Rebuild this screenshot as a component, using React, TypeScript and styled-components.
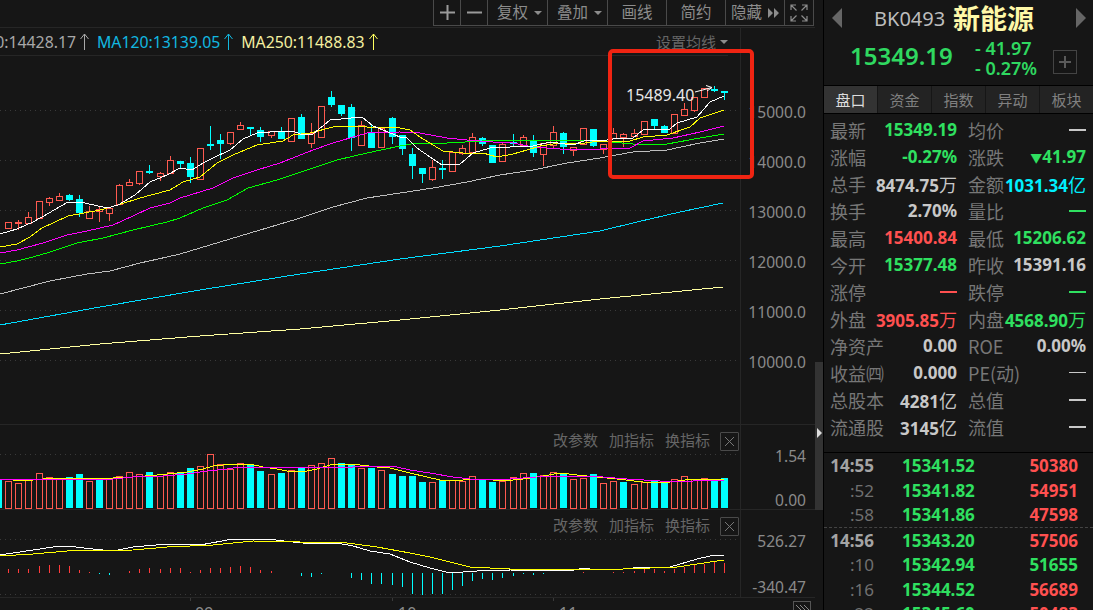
import styled, { createGlobalStyle } from "styled-components";

const FONT = `"Noto Sans", "Noto Sans CJK SC", sans-serif`;
const CJK = `"Noto Sans CJK SC", sans-serif`;
const UP = "#ff5a50";
const CYAN = "#00ffff";

const GlobalStyle = createGlobalStyle`
  html, body {
    margin: 0;
    height: 610px;
    overflow: hidden;
    background: #161616;
    font-family: ${FONT};
  }
`;

const Page = styled.div`
  display: flex;
  width: 1093px;
  height: 610px;
  overflow: hidden;
  background: #161616;
`;
const ChartColumn = styled.div`
  width: 815px;
  display: flex;
  flex-direction: column;
`;
const Toolbar = styled.div`
  height: 28px;
  box-sizing: border-box;
  padding-right: 1px;
  display: flex;
  justify-content: flex-end;
  align-items: flex-start;
  border-bottom: 1px solid #262626;
`;
const ToolGroup = styled.div`
  display: flex;
  height: 25px;
  border: 1px solid #4a4a4a;
  border-top: 0;
`;
const ToolButton = styled.div<{ $w: number; $inset?: number }>`
  width: ${(p) => p.$w}px;
  box-sizing: border-box;
  padding-left: ${(p) => p.$inset ?? 0}px;
  display: flex;
  align-items: center;
  justify-content: center;
  gap: 6px;
  color: #8c8c8c;
  font-size: 15.5px;
  line-height: 1;
  border-right: 1px solid #4a4a4a;
  &:last-child {
    border-right: 0;
  }
`;
const Caret = styled.i`
  width: 0;
  height: 0;
  border-left: 4px solid transparent;
  border-right: 4px solid transparent;
  border-top: 4px solid #8c8c8c;
`;
const Pane = styled.div<{ $h: number }>`
  height: ${(p) => p.$h}px;
  flex: none;
  box-sizing: border-box;
  display: flex;
  position: relative;
  border-bottom: 1px solid #262626;
`;
const ChartArea = styled.div`
  width: 741px;
  box-sizing: border-box;
  border-right: 1px solid #262626;
  display: flex;
  flex-direction: column;
  position: relative;
`;
const MaBar = styled.div`
  height: 28px;
  width: 728px;
  box-sizing: border-box;
  flex: none;
  display: flex;
  align-items: center;
  border-bottom: 1px solid #262626;
  font-size: 15.8px;
  white-space: nowrap;
`;
const ClippedMa = styled.div`
  width: 97px;
  display: flex;
  justify-content: flex-end;
  overflow: hidden;
`;
const MaItem = styled.span<{ $c: string }>`
  color: ${(p) => p.$c};
  display: inline-flex;
  align-items: center;
  gap: 4px;
  margin-right: 8px;
`;
const MaSetting = styled.span`
  margin-left: auto;
  color: #666;
  font-size: 15px;
  display: inline-flex;
  align-items: center;
  gap: 4px;
`;
const Svg = styled.svg`
  display: block;
  flex: none;
`;
const Axis = styled.div<{ $top: number }>`
  flex: 1;
  padding-top: ${(p) => p.$top}px;
  padding-right: 9px;
  color: #8a8a8a;
  font-size: 15.6px;
  text-align: right;
`;
const AxisLabel = styled.div<{ $h: number; $gap?: number }>`
  height: ${(p) => p.$h}px;
  line-height: ${(p) => p.$h}px;
  margin-top: ${(p) => p.$gap ?? 0}px;
`;
const HighlightBox = styled.div`
  position: absolute;
  left: 608px;
  top: 21px;
  width: 146px;
  height: 130px;
  box-sizing: border-box;
  border: 4px solid #f02412;
  border-radius: 5px;
`;
const HighLabel = styled.span`
  position: absolute;
  left: 626px;
  top: 57px;
  color: #e8e8e8;
  font-size: 16px;
  line-height: 20px;
`;
const PaneTools = styled.div`
  position: absolute;
  top: 5px;
  right: 1px;
  display: flex;
  align-items: center;
  gap: 11px;
  color: #666;
  font-size: 15px;
  line-height: 20px;
`;
const PaneToolLabel = styled.span`
  padding-bottom: 2px;
`;
const CloseBox = styled.span`
  width: 17px;
  height: 17px;
  margin-left: -1px;
  border: 1px solid #4a4a4a;
  border-radius: 1px;
  display: flex;
  align-items: center;
  justify-content: center;
`;
const TimeAxis = styled.div`
  flex: 1;
  position: relative;
  overflow: hidden;
  color: #8a8a8a;
  font-size: 16px;
`;
const TimeLabel = styled.span<{ $x: number }>`
  position: absolute;
  left: ${(p) => p.$x}px;
  top: 5px;
  line-height: 20px;
`;
const Tick = styled.i<{ $x: number }>`
  position: absolute;
  left: ${(p) => p.$x}px;
  top: 0;
  height: 3px;
  border-left: 1px solid #3a3a3a;
`;
const CornerBox = styled.span`
  position: absolute;
  right: 4px;
  top: 3px;
  width: 16px;
  height: 16px;
  border: 1px solid #555;
`;
const ScrollTrack = styled.div`
  width: 8px;
  flex: none;
  padding-top: 362px;
`;
const ScrollThumb = styled.div`
  height: 148px;
  background: #333;
  display: flex;
  justify-content: center;
  padding-top: 66px;
  box-sizing: border-box;
`;
const SidePanel = styled.div`
  flex: 1;
  border-left: 1px solid #000;
  display: flex;
  flex-direction: column;
  min-width: 0;
`;
const TitleRow = styled.div`
  height: 36px;
  flex: none;
  display: flex;
  align-items: center;
  padding: 0 7px 0 8px;
`;
const Triangle = styled.i<{ $dir: "l" | "r" }>`
  width: 0;
  height: 0;
  border-top: 10px solid transparent;
  border-bottom: 10px solid transparent;
  ${(p) => (p.$dir === "l" ? "border-right: 10px solid #666;" : "border-left: 10px solid #666;")}
`;
const Code = styled.span`
  margin-left: 32px;
  color: #bdbdbd;
  font-size: 20px;
  width: 79px;
`;
const Name = styled.span`
  flex: 1;
  color: #fff8a8;
  font-family: ${CJK};
  font-size: 27px;
  font-weight: 700;
  line-height: 36px;
`;
const PriceRow = styled.div`
  height: 49px;
  flex: none;
  box-sizing: border-box;
  display: flex;
  align-items: center;
  padding: 0 0 11px 26px;
`;
const BigPrice = styled.span`
  width: 125px;
  color: #2fd860;
  font-size: 24px;
  font-weight: 600;
`;
const ChangeStack = styled.div`
  width: 78px;
  margin-top: 6px;
  color: #2fd860;
  font-size: 18px;
  font-weight: 600;
  line-height: 20px;
`;
const AddBox = styled.span`
  width: 22px;
  height: 22px;
  margin-top: 13px;
  border: 1px solid #444;
  display: flex;
  align-items: center;
  justify-content: center;
`;
const Tabs = styled.div`
  height: 29px;
  box-sizing: border-box;
  flex: none;
  display: flex;
  gap: 1px;
  border-top: 1px solid #000;
  border-bottom: 1px solid #000;
`;
const Tab = styled.div<{ $active?: boolean }>`
  flex: 1;
  display: flex;
  align-items: center;
  justify-content: center;
  background: ${(p) => (p.$active ? "#333" : "#232323")};
  color: ${(p) => (p.$active ? "#dcdcdc" : "#808080")};
  font-size: 15px;
`;
const QuoteGrid = styled.div`
  padding: 2px 0 0 6px;
  display: grid;
  grid-template-columns: 127px 118px;
  column-gap: 11px;
  flex: none;
`;
const QuoteCell = styled.div`
  height: 27px;
  display: flex;
  align-items: center;
  justify-content: space-between;
  white-space: nowrap;
`;
const QuoteLabel = styled.span`
  color: #777;
  font-family: ${CJK};
  font-size: 18px;
`;
const toneColor: Record<string, string> = {
  green: "#2fe060",
  red: "#ff5050",
  cyan: "#00f0ff",
  white: "#c8c8c8",
};
const QuoteValue = styled.span<{ $tone: string }>`
  color: ${(p) => toneColor[p.$tone]};
  margin-left: -2px;
  font-size: 17px;
  font-weight: 700;
  small {
    font-family: ${CJK};
    font-size: 18px;
    font-weight: 400;
  }
  i {
    font-style: normal;
    font-size: 12px;
  }
`;
const Dash = styled.i<{ $tone: string; $thin?: boolean }>`
  width: 17px;
  height: ${(p) => (p.$thin ? 1 : 2)}px;
  background: ${(p) => toneColor[p.$tone]};
`;
const TradeList = styled.div`
  margin-top: 12px;
  border-top: 1px solid #000;
  flex: 1;
  overflow: hidden;
`;
const TradeRow = styled.div<{ $split?: boolean }>`
  height: 24.75px;
  box-sizing: border-box;
  display: grid;
  grid-template-columns: 50px 103px 101px;
  align-items: center;
  font-size: 17px;
  font-weight: 700;
  ${(p) => (p.$split ? "border-top: 1px dashed #444;" : "")}
`;
const TradeTime = styled.span<{ $major?: boolean }>`
  text-align: right;
  color: ${(p) => (p.$major ? "#a4a4a4" : "#707070")};
  font-weight: ${(p) => (p.$major ? 700 : 400)};
`;
const TradePrice = styled.span`
  color: #2fe060;
  padding-left: 28px;
`;
const TradeVolume = styled.span<{ $tone: string }>`
  text-align: right;
  color: ${(p) => toneColor[p.$tone]};
`;

const barX = (i: number) => Math.round(8.3 + 10.085 * i);

// wick top, body top, body bottom, wick bottom, 1 = up
type Candle = [number, number, number, number, number];
const candles: Candle[] = [
  [222, 222, 228, 229, 1], [220, 222, 223, 230, 1], [212, 217, 223, 223, 1], [201, 201, 218, 218, 1],
  [197, 198, 202, 206, 1], [193, 196, 200, 200, 1], [194, 195, 200, 201, 0], [195, 199, 213, 217, 0],
  [206, 211, 218, 218, 1], [207, 209, 211, 222, 1], [207, 208, 213, 221, 1], [184, 185, 204, 204, 1],
  [179, 182, 185, 185, 1], [171, 171, 183, 185, 1], [165, 171, 173, 174, 0], [172, 173, 176, 181, 1],
  [156, 160, 173, 173, 1], [161, 161, 164, 168, 0], [157, 163, 177, 183, 0], [148, 148, 179, 179, 1],
  [126, 144, 145, 150, 0], [134, 140, 144, 159, 0], [132, 132, 143, 145, 1], [122, 125, 129, 129, 1],
  [127, 127, 129, 135, 0], [127, 130, 137, 142, 0], [131, 131, 135, 138, 1], [127, 131, 139, 139, 0],
  [118, 118, 141, 141, 1], [114, 117, 139, 139, 0], [123, 133, 143, 148, 1], [106, 106, 137, 137, 1],
  [91, 97, 105, 107, 0], [105, 105, 114, 116, 0], [104, 107, 138, 151, 0], [121, 125, 145, 145, 1],
  [125, 133, 148, 148, 0], [128, 128, 147, 147, 1], [117, 118, 137, 144, 0], [135, 135, 149, 155, 0],
  [148, 154, 166, 179, 0], [168, 168, 174, 183, 0], [160, 167, 179, 181, 1], [160, 168, 170, 179, 0],
  [152, 152, 171, 171, 1], [145, 148, 153, 155, 1], [133, 137, 152, 153, 1], [137, 138, 144, 146, 0],
  [145, 145, 163, 163, 0], [143, 144, 161, 161, 1], [134, 142, 143, 147, 0], [135, 137, 145, 145, 1],
  [135, 141, 153, 157, 0], [143, 143, 154, 166, 1], [126, 132, 145, 149, 1], [132, 133, 147, 154, 0],
  [147, 147, 150, 156, 1], [128, 128, 144, 144, 1], [129, 129, 146, 147, 0], [144, 144, 149, 154, 1],
  [128, 133, 138, 139, 1], [133, 134, 137, 147, 1], [129, 133, 136, 136, 1], [121, 121, 134, 134, 1],
  [119, 119, 126, 129, 0], [125, 126, 133, 133, 0], [114, 114, 133, 133, 1], [103, 109, 115, 115, 1],
  [97, 97, 110, 112, 1], [88, 88, 97, 97, 1], [86, 89, 90, 92, 0], [91, 91, 92, 100, 0],
];

const pts = (a: number[][]) => a.map((p) => p.join(",")).join(" ");

const maLines: { color: string; points: number[][] }[] = [
  { color: "#ffffa0", points: [[0, 354], [100, 344], [200, 336], [300, 329], [400, 320], [500, 310], [600, 299], [723, 287]] },
  { color: "#00dcff", points: [[0, 325], [100, 307], [200, 290], [300, 274], [400, 259], [500, 246], [600, 231], [637, 222], [680, 212], [723, 203]] },
  { color: "#bdbdbd", points: [[0, 294], [50, 281], [87, 274], [110, 271], [140, 263], [167, 257], [180, 254], [240, 236], [297, 219], [333, 207], [367, 198], [400, 193], [433, 188], [467, 182], [500, 175], [533, 170], [567, 163], [600, 158], [633, 152], [667, 150], [700, 143], [724, 139]] },
  { color: "#00ff00", points: [[0, 264], [17, 261], [33, 257], [50, 252], [77, 243], [103, 238], [133, 230], [167, 222], [180, 218], [203, 208], [227, 200], [248, 188], [277, 180], [310, 169], [337, 160], [367, 153], [400, 146], [417, 143], [447, 143], [500, 140], [533, 140], [600, 141], [633, 144], [667, 144], [700, 138], [724, 134]] },
  { color: "#ff00ff", points: [[0, 253], [17, 250], [43, 243], [67, 235], [87, 231], [113, 225], [133, 216], [150, 208], [170, 203], [180, 198], [213, 188], [233, 178], [257, 170], [280, 163], [313, 150], [333, 143], [367, 133], [400, 132], [420, 133], [447, 138], [467, 140], [493, 142], [513, 143], [533, 147], [560, 149], [600, 149], [630, 148], [643, 141], [673, 138], [700, 132], [724, 126]] },
  { color: "#ffff00", points: [[0, 247], [17, 244], [30, 237], [42, 228], [68, 216], [100, 210], [118, 205], [140, 198], [170, 190], [183, 182], [200, 177], [217, 163], [233, 155], [257, 145], [283, 141], [293, 135], [310, 133], [333, 127], [347, 126], [367, 127], [400, 128], [410, 130], [420, 137], [433, 145], [443, 151], [463, 153], [483, 153], [497, 157], [513, 154], [527, 150], [540, 146], [560, 143], [577, 144], [600, 141], [630, 141], [643, 137], [667, 135], [690, 127], [700, 118], [724, 110]] },
  { color: "#ffffff", points: [[0, 234], [17, 229], [33, 222], [42, 217], [68, 202], [85, 203], [107, 208], [118, 205], [135, 195], [150, 182], [167, 175], [180, 168], [192, 170], [203, 163], [213, 158], [230, 150], [243, 139], [257, 133], [270, 132], [293, 131], [300, 134], [313, 134], [330, 120], [362, 117], [373, 126], [383, 130], [400, 137], [407, 138], [417, 148], [430, 157], [442, 165], [460, 164], [473, 153], [490, 148], [510, 147], [533, 146], [550, 142], [573, 145], [587, 140], [600, 141], [620, 138], [633, 138], [643, 130], [653, 129], [670, 129], [677, 123], [697, 117], [710, 102], [724, 96]] },
];

// tops of the volume bars, 1 = hollow red
const volumes: [number, number][] = [
  [481, 1], [483, 1], [479, 1], [473, 1], [477, 1], [479, 1], [477, 0], [474, 0], [481, 1], [479, 0],
  [479, 1], [476, 1], [472, 1], [474, 1], [472, 0], [476, 1], [472, 1], [472, 0], [468, 0], [466, 1],
  [454, 1], [464, 1], [469, 1], [463, 1], [465, 0], [471, 0], [474, 1], [473, 0], [470, 1], [468, 0],
  [465, 1], [463, 1], [458, 1], [463, 0], [465, 0], [468, 1], [468, 0], [470, 1], [474, 0], [476, 0],
  [476, 0], [482, 0], [482, 1], [480, 0], [480, 1], [481, 1], [476, 1], [480, 0], [482, 0], [481, 1],
  [477, 1], [473, 1], [473, 0], [475, 1], [472, 1], [473, 0], [479, 1], [478, 1], [474, 0], [483, 1],
  [481, 1], [482, 0], [484, 1], [482, 1], [481, 0], [482, 0], [479, 1], [476, 1], [479, 1], [478, 1],
  [480, 0], [478, 0],
];
const volYellow = [[0, 479], [13, 480], [33, 480], [43, 479], [63, 478], [83, 478], [113, 478], [133, 477], [157, 475], [167, 474], [187, 472], [203, 469], [213, 466], [223, 465], [233, 464], [250, 464], [263, 467], [277, 469], [287, 471], [307, 471], [317, 469], [330, 465], [347, 464], [360, 465], [377, 467], [390, 468], [410, 473], [427, 477], [440, 480], [457, 481], [470, 479], [483, 479], [503, 481], [523, 479], [543, 476], [560, 473], [577, 475], [597, 477], [617, 479], [643, 482], [670, 482], [693, 479], [724, 479]];
const volMagenta = [[0, 479], [33, 480], [43, 479], [113, 479], [133, 477], [163, 476], [187, 474], [207, 471], [227, 469], [240, 467], [253, 467], [270, 467], [277, 467], [340, 468], [367, 466], [397, 467], [410, 470], [430, 473], [453, 477], [470, 479], [497, 480], [510, 479], [550, 476], [577, 476], [603, 477], [627, 479], [660, 481], [693, 481], [724, 480]];
const macdWhite = [[0, 555], [13, 553], [33, 550], [53, 547], [67, 546], [93, 549], [113, 551], [133, 547], [167, 544], [200, 545], [233, 539], [267, 539], [293, 542], [313, 544], [337, 543], [353, 546], [370, 551], [390, 554], [410, 562], [430, 568], [450, 573], [477, 571], [510, 570], [570, 571], [583, 568], [597, 570], [623, 569], [643, 567], [670, 567], [697, 559], [710, 556], [724, 555]];
const macdYellow = [[0, 556], [33, 554], [67, 551], [133, 550], [167, 547], [213, 545], [253, 541], [347, 543], [377, 547], [410, 553], [430, 557], [450, 562], [470, 567], [510, 569], [623, 569], [677, 567], [697, 564], [724, 560]];
const macdBars = [
  4.5, 4.5, 4.5, 7.5, 8.5, 8.5, 7.5, 3.5, 0.7, -0.7, -1.7, 0.5, 2.5, 4.5, 5.5, 4.5, 5.5, 5.5, 1.5, 3.5,
  5.5, 5.5, 6.5, 7.5, 6.5, 3.5, 2.5, 0, 0.5, -2.7, -3.7, -1, 0.5, 0, -4.7, -6.7, -10.7, -10.7, -11.7, -13.7,
  -20.7, -21.7, -20.7, -20.7, -16.7, -12.7, -7.7, -5.7, -6.7, -4.7, -2.7, -0.7, -1.7, -0.7, 0.5, 0, 0, 1.3, 0.5, 0,
  1.3, 1.3, 2.5, 4.5, 4.5, 2.5, 4.5, 6.5, 8.5, 9.5, 11.5, 10.5,
];

function GridDots({ ys }: { ys: number[] }) {
  return (
    <>
      {ys.map((y) => (
        <line key={y} x1={0} x2={740} y1={y + 0.5} y2={y + 0.5} stroke="#3a3a3a" strokeDasharray="1 4" />
      ))}
    </>
  );
}

function Line({ color, points }: { color: string; points: number[][] }) {
  return <polyline points={pts(points)} fill="none" stroke={color} strokeWidth={1} shapeRendering="crispEdges" />;
}

function CandleChart() {
  return (
    <Svg width={740} height={368} viewBox="0 56 740 368">
      <GridDots ys={[110, 160, 210, 260, 310, 360]} />
      {candles.map(([wt, bt, bb, wb, up], i) => {
        const x = barX(i);
        const c = up ? UP : CYAN;
        const flat = bb - bt <= 1;
        return (
          <g key={i} shapeRendering="crispEdges">
            <line x1={x + 0.5} x2={x + 0.5} y1={wt} y2={wb} stroke={c} />
            {up ? (
              <rect x={x - 2.5} y={bt + 0.5} width={6} height={bb - bt} fill="#161616" stroke={c} />
            ) : flat ? (
              <rect x={x - 3} y={bt} width={7} height={2} fill={c} />
            ) : (
              <rect x={x - 3} y={bt} width={7} height={bb - bt} fill={c} />
            )}
          </g>
        );
      })}
      {maLines.map((l) => (
        <Line key={l.color} color={l.color} points={l.points} />
      ))}
      <polyline points="695,92 712,87.5" fill="none" stroke="#fff" />
      <polyline points="706,85.5 712,87.5 707,91" fill="none" stroke="#fff" />
    </Svg>
  );
}

function VolumeChart() {
  return (
    <Svg width={740} height={84} viewBox="0 425 740 84">
      <GridDots ys={[454]} />
      <rect x={0} y={479} width={2} height={29} fill={CYAN} shapeRendering="crispEdges" />
      {volumes.map(([top, up], i) => {
        const x = barX(i);
        return up ? (
          <rect key={i} x={x - 2.5} y={top + 0.5} width={6} height={507.5 - top} fill="#161616" stroke={UP} shapeRendering="crispEdges" />
        ) : (
          <rect key={i} x={x - 3} y={top} width={7} height={508 - top} fill={CYAN} shapeRendering="crispEdges" />
        );
      })}
      <Line color="#ffff00" points={volYellow} />
      <Line color="#ff00ff" points={volMagenta} />
    </Svg>
  );
}

function MacdChart() {
  return (
    <Svg width={740} height={87} viewBox="0 510 740 87">
      <GridDots ys={[539, 594]} />
      {macdBars.map((v, i) =>
        v === 0 ? null : (
          <rect
            key={i}
            x={barX(i)}
            y={v > 0 ? 573 - v : 573}
            width={1}
            height={Math.abs(v)}
            fill={v > 0 ? "#ff3a3a" : CYAN}
            shapeRendering="crispEdges"
          />
        )
      )}
      <Line color="#ffffff" points={macdWhite} />
      <Line color="#ffff00" points={macdYellow} />
    </Svg>
  );
}

function UpArrow({ color }: { color: string }) {
  return (
    <svg width={9} height={17} viewBox="0 0 9 17">
      <path d="M4.5 1V17M0.5 6L4.5 1L8.5 6" fill="none" stroke={color} />
    </svg>
  );
}

function CloseIcon() {
  return (
    <svg width={11} height={11} viewBox="0 0 11 11">
      <path d="M1 1L10 10M10 1L1 10" stroke="#777" />
    </svg>
  );
}

function PaneToolbar() {
  return (
    <PaneTools>
      <PaneToolLabel>改参数</PaneToolLabel>
      <PaneToolLabel>加指标</PaneToolLabel>
      <PaneToolLabel>换指标</PaneToolLabel>
      <CloseBox>
        <CloseIcon />
      </CloseBox>
    </PaneTools>
  );
}

type QuoteItem = { label: string; value?: string; unit?: string; tone: string; thin?: boolean; prefix?: string };
const quotes: QuoteItem[] = [
  { label: "最新", value: "15349.19", tone: "green" },
  { label: "均价", tone: "white" },
  { label: "涨幅", value: "-0.27%", tone: "green" },
  { label: "涨跌", value: "41.97", prefix: "▼", tone: "green" },
  { label: "总手", value: "8474.75", unit: "万", tone: "white" },
  { label: "金额", value: "1031.34", unit: "亿", tone: "cyan" },
  { label: "换手", value: "2.70%", tone: "white" },
  { label: "量比", tone: "green" },
  { label: "最高", value: "15400.84", tone: "red" },
  { label: "最低", value: "15206.62", tone: "green" },
  { label: "今开", value: "15377.48", tone: "green" },
  { label: "昨收", value: "15391.16", tone: "white" },
  { label: "涨停", tone: "red" },
  { label: "跌停", tone: "green" },
  { label: "外盘", value: "3905.85", unit: "万", tone: "red" },
  { label: "内盘", value: "4568.90", unit: "万", tone: "green" },
  { label: "净资产", value: "0.00", tone: "white" },
  { label: "ROE", value: "0.00%", tone: "white" },
  { label: "收益㈣", value: "0.000", tone: "white" },
  { label: "PE(动)", tone: "white", thin: true },
  { label: "总股本", value: "4281", unit: "亿", tone: "white" },
  { label: "总值", tone: "white" },
  { label: "流通股", value: "3145", unit: "亿", tone: "white" },
  { label: "流值", tone: "white" },
];

const trades = [
  { time: "14:55", major: true, price: "15341.52", vol: "50380", tone: "red" },
  { time: ":52", price: "15341.82", vol: "54951", tone: "red" },
  { time: ":58", price: "15341.86", vol: "47598", tone: "red" },
  { time: "14:56", major: true, split: true, price: "15343.20", vol: "57506", tone: "red" },
  { time: ":10", price: "15342.94", vol: "51655", tone: "green" },
  { time: ":16", price: "15344.52", vol: "56689", tone: "red" },
  { time: ":22", price: "15345.60", vol: "50483", tone: "red" },
];

const tools = [
  { label: "复权", w: 60, caret: true },
  { label: "叠加", w: 60, caret: true },
  { label: "画线", w: 59 },
  { label: "简约", w: 59 },
];

export default function App() {
  return (
    <Page>
      <GlobalStyle />
      <ChartColumn>
        <Toolbar>
          <ToolGroup>
            <ToolButton $w={27}>
              <svg width={15} height={15} viewBox="0 0 15 15">
                <path d="M7.5 0V15M0 7.5H15" stroke="#9a9a9a" strokeWidth={2} />
              </svg>
            </ToolButton>
            <ToolButton $w={27}>
              <svg width={15} height={3} viewBox="0 0 15 3">
                <path d="M0 1.5H15" stroke="#9a9a9a" strokeWidth={2} />
              </svg>
            </ToolButton>
            {tools.map((t) => (
              <ToolButton key={t.label} $w={t.w} $inset={t.caret ? 4 : 0}>
                {t.label}
                {t.caret && <Caret />}
              </ToolButton>
            ))}
            <ToolButton $w={59}>
              隐藏
              <svg width={11} height={10} viewBox="0 0 11 10">
                <path d="M0 0L5 5L0 10ZM6 0L11 5L6 10Z" fill="#8c8c8c" />
              </svg>
            </ToolButton>
            <ToolButton $w={28}>
              <svg width={18} height={18} viewBox="0 0 18 18">
                <path
                  d="M1 6V1H6M1 1L6.5 6.5M12 1H17V6M17 1L11.5 6.5M1 12V17H6M1 17L6.5 11.5M12 17H17V12M17 17L11.5 11.5"
                  fill="none"
                  stroke="#8c8c8c"
                  strokeWidth={1.2}
                />
              </svg>
            </ToolButton>
          </ToolGroup>
        </Toolbar>
        <Pane $h={397}>
          <ChartArea>
            <MaBar>
              <ClippedMa>
                <MaItem $c="#a8a8a8">
                  MA60:14428.17 <UpArrow color="#a8a8a8" />
                </MaItem>
              </ClippedMa>
              <MaItem $c="#12b8e0">
                MA120:13139.05 <UpArrow color="#12b8e0" />
              </MaItem>
              <MaItem $c="#f4f0a0">
                MA250:11488.83 <UpArrow color="#ffff60" />
              </MaItem>
              <MaSetting>
                设置均线 <Caret />
              </MaSetting>
            </MaBar>
            <CandleChart />
          </ChartArea>
          <Axis $top={59}>
            {["15000.0", "14000.0", "13000.0", "12000.0", "11000.0", "10000.0"].map((v) => (
              <AxisLabel key={v} $h={50}>
                {v}
              </AxisLabel>
            ))}
          </Axis>
          <HighlightBox />
          <HighLabel>15489.40</HighLabel>
        </Pane>
        <Pane $h={85}>
          <ChartArea>
            <VolumeChart />
            <PaneToolbar />
          </ChartArea>
          <Axis $top={20}>
            <AxisLabel $h={22}>1.54</AxisLabel>
            <AxisLabel $h={22} $gap={22}>
              0.00
            </AxisLabel>
          </Axis>
        </Pane>
        <Pane $h={88}>
          <ChartArea>
            <MacdChart />
            <PaneToolbar />
          </ChartArea>
          <Axis $top={20}>
            <AxisLabel $h={22}>526.27</AxisLabel>
            <AxisLabel $h={22} $gap={24}>
              -340.47
            </AxisLabel>
          </Axis>
        </Pane>
        <TimeAxis>
          <Tick $x={190} />
          <Tick $x={392} />
          <Tick $x={553} />
          <TimeLabel $x={195}>09</TimeLabel>
          <TimeLabel $x={398}>10</TimeLabel>
          <TimeLabel $x={559}>11</TimeLabel>
          <CornerBox>
            <svg width={16} height={16} viewBox="0 0 16 16">
              <path d="M2 2L11 11M6 2L15 11M10 2L15 7" stroke="#888" fill="none" />
            </svg>
          </CornerBox>
        </TimeAxis>
      </ChartColumn>
      <ScrollTrack>
        <ScrollThumb>
          <svg width={5} height={10} viewBox="0 0 5 10">
            <path d="M0 0L5 5L0 10Z" fill="#ddd" />
          </svg>
        </ScrollThumb>
      </ScrollTrack>
      <SidePanel>
        <TitleRow>
          <Triangle $dir="l" />
          <Code>BK0493</Code>
          <Name>新能源</Name>
          <Triangle $dir="r" />
        </TitleRow>
        <PriceRow>
          <BigPrice>15349.19</BigPrice>
          <ChangeStack>
            <div>- 41.97</div>
            <div>- 0.27%</div>
          </ChangeStack>
          <AddBox>
            <svg width={14} height={14} viewBox="0 0 14 14">
              <path d="M7 1V13M1 7H13" stroke="#5a5a5a" strokeWidth={2} />
            </svg>
          </AddBox>
        </PriceRow>
        <Tabs>
          {["盘口", "资金", "指数", "异动", "板块"].map((t, i) => (
            <Tab key={t} $active={i === 0}>
              {t}
            </Tab>
          ))}
        </Tabs>
        <QuoteGrid>
          {quotes.map((q) => (
            <QuoteCell key={q.label}>
              <QuoteLabel>{q.label}</QuoteLabel>
              {q.value ? (
                <QuoteValue $tone={q.tone}>
                  {q.prefix && <i>{q.prefix}</i>}
                  {q.value}
                  {q.unit && <small>{q.unit}</small>}
                </QuoteValue>
              ) : (
                <Dash $tone={q.tone} $thin={q.thin} />
              )}
            </QuoteCell>
          ))}
        </QuoteGrid>
        <TradeList>
          {trades.map((t) => (
            <TradeRow key={t.time} $split={t.split}>
              <TradeTime $major={t.major}>{t.time}</TradeTime>
              <TradePrice>{t.price}</TradePrice>
              <TradeVolume $tone={t.tone}>{t.vol}</TradeVolume>
            </TradeRow>
          ))}
        </TradeList>
      </SidePanel>
    </Page>
  );
}
